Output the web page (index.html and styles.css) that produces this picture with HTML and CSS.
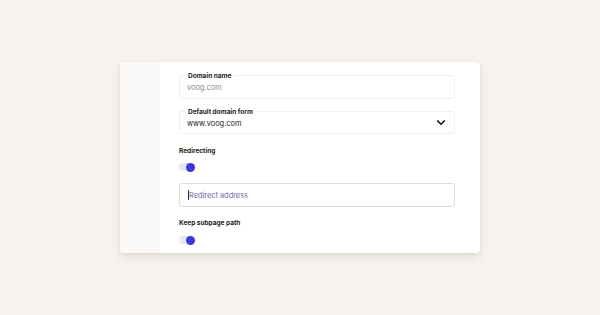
FILE: index.html
```html
<!DOCTYPE html>
<html>
<head>
<meta charset="utf-8">
<link rel="stylesheet" href="styles.css">
</head>
<body>
<div class="stage">
  <div class="card">
    <div class="side"></div>
    <div class="main">
      <div class="field">
        <span class="legend">Domain name</span>
        <span class="value muted">voog.com</span>
      </div>
      <div class="field select">
        <span class="legend">Default domain form</span>
        <span class="value">www.voog.com</span>
        <svg class="chev" width="10" height="7" viewBox="0 0 10 7"><path d="M1.2 1.5 L5 5.2 L8.8 1.5" fill="none" stroke="#111" stroke-width="1.6"/></svg>
      </div>
      <div class="label">Redirecting</div>
      <div class="toggle"><span class="knob"></span></div>
      <div class="input"><span class="caret"></span><span class="placeholder">Redirect address</span></div>
      <div class="label">Keep subpage path</div>
      <div class="toggle"><span class="knob"></span></div>
    </div>
  </div>
</div>
</body>
</html>
```
FILE: styles.css
```css
html, body {
  margin: 0;
  padding: 0;
}
body {
  width: 600px;
  height: 315px;
  background: #f7f4f0;
  font-family: "Inter", "Lato", "Liberation Sans", sans-serif;
  overflow: hidden;
}
.stage {
  padding: 62px 0 0 120px;
}
.card {
  width: 360px;
  height: 191px;
  background: #ffffff;
  border-radius: 4px;
  display: flex;
  overflow: hidden;
  box-shadow: 0 4px 10px rgba(120, 110, 95, 0.18), 0 1px 3px rgba(120, 110, 95, 0.08);
}
.side {
  width: 40px;
  background: #faf9f8;
}
.main {
  flex: 1;
  padding: 13px 25px 0 19px;
  display: flex;
  flex-direction: column;
}
.field {
  position: relative;
  height: 24px;
  border: 1px solid #f0efed;
  border-radius: 3px;
  display: flex;
  align-items: center;
  padding: 2px 8px 0 7px;
  box-sizing: border-box;
  margin-bottom: 12px;
}
.legend {
  position: absolute;
  left: 5px;
  top: -4px;
  padding: 0 3px;
  background: #fff;
  font-size: 6.5px;
  font-weight: 700;
  color: #1a1a1a;
  line-height: 9px;
}
.value {
  font-size: 7.4px;
  color: #222;
  line-height: 10px;
}
.value.muted {
  color: #8a8a8a;
}
.select {
  justify-content: space-between;
  height: 23px;
}
.chev {
  margin-top: -2px;
}
.label {
  font-size: 6.5px;
  font-weight: 700;
  color: #1a1a1a;
  line-height: 9px;
  margin-top: 1px;
}
.toggle {
  width: 16px;
  height: 8px;
  background: #e8e7f8;
  border-radius: 4px;
  position: relative;
  margin-top: 7px;
}
.knob {
  position: absolute;
  right: 0;
  top: -0.5px;
  width: 9px;
  height: 9px;
  border-radius: 50%;
  background: #3d36d9;
}
.input {
  margin-top: 12px;
  height: 24px;
  border: 1px solid #dedcd9;
  border-radius: 3px;
  box-sizing: border-box;
  display: flex;
  align-items: center;
  padding-left: 8px;
  margin-bottom: 11px;
}
.caret {
  width: 1px;
  height: 10px;
  background: #333;
}
.placeholder {
  font-size: 7.4px;
  color: #6e6aa3;
}
.toggle:last-child {
  margin-top: 8px;
}
```
